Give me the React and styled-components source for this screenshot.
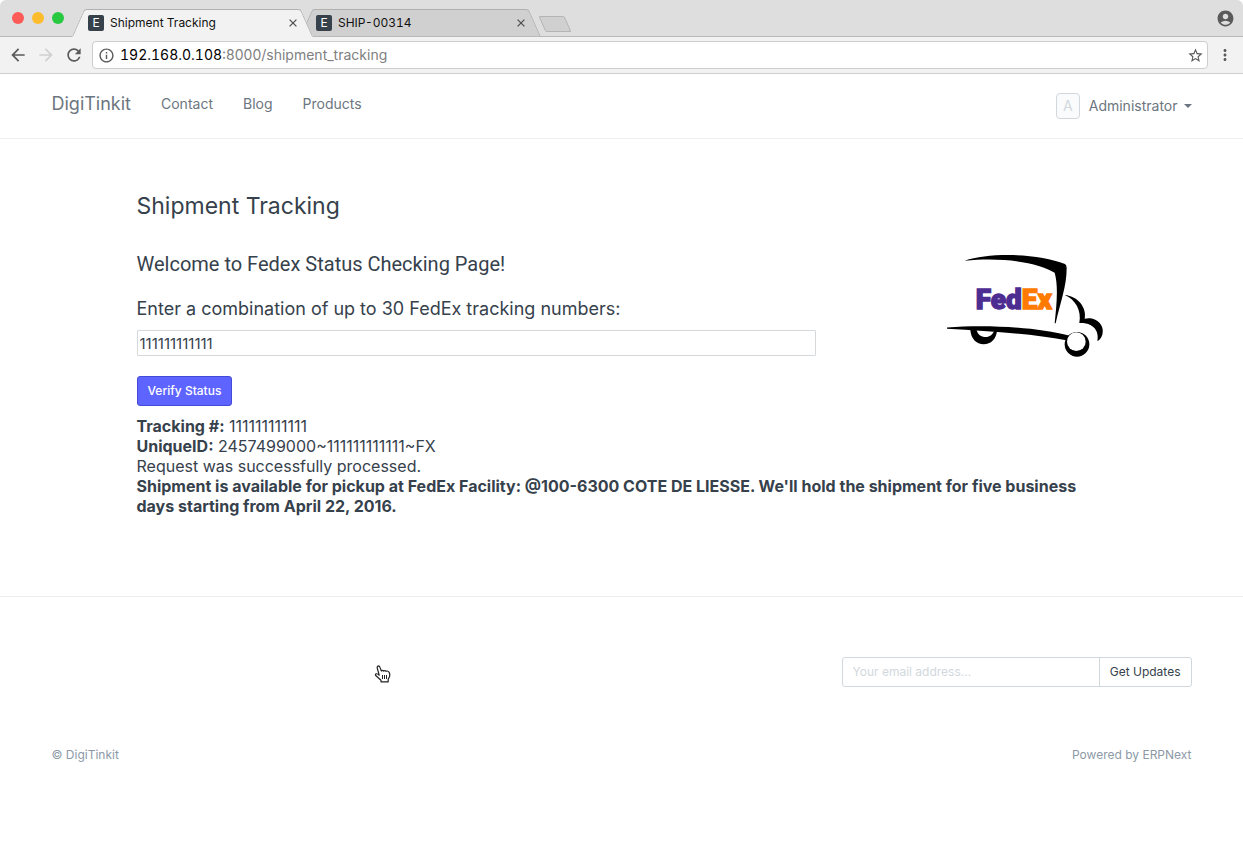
import React, { useState } from 'react';
import styled, { createGlobalStyle, css } from 'styled-components';
import {
  MdArrowBack,
  MdArrowForward,
  MdRefresh,
  MdInfoOutline,
  MdStarBorder,
  MdMoreVert,
  MdAccountCircle,
} from 'react-icons/md';

const GlobalStyle = createGlobalStyle`
  *, *::before, *::after { box-sizing: border-box; }
  body {
    margin: 0;
    background: #fff;
    color: #36414c;
    font-family: Inter, "Liberation Sans", sans-serif;
    font-size: 14px;
    line-height: 20px;
  }
  button, input { font: inherit; color: inherit; }
  h1, h2, p { margin: 0; }
  a { color: inherit; text-decoration: none; }
`;

const plainButton = css`
  display: flex;
  align-items: center;
  justify-content: center;
  padding: 0;
  border: 0;
  background: none;
`;

/* Browser window */

const TabStrip = styled.div`
  display: flex;
  align-items: flex-end;
  height: 37px;
  padding: 0 8px 0 12px;
  background: #dedede;
  border-bottom: 1px solid #b9b9b9;
  border-radius: 6px 6px 0 0;
`;

const WindowControls = styled.div`
  display: flex;
  align-self: center;
  gap: 8px;
  width: 54px;
`;

const WindowDot = styled.button`
  ${plainButton}
  width: 12px;
  height: 12px;
  border-radius: 50%;
  background: ${(p) => p.$color};
`;

const Tabs = styled.div`
  display: flex;
  align-items: flex-end;
  flex: 1;
  margin-left: 12px;
`;

const Tab = styled.div`
  position: relative;
  z-index: ${(p) => (p.$active ? 2 : 1)};
  display: flex;
  align-items: center;
  gap: 6px;
  width: 229px;
  height: 28px;
  margin: 0 -1px -1px 0;
  padding: 0 8px 0 10px;
  color: #111;
  font-size: 12px;
  font-variant-numeric: tabular-nums;

  &::before,
  &::after {
    content: '';
    position: absolute;
    z-index: -1;
    top: 0;
    bottom: 0;
    background: ${(p) => (p.$active ? '#f2f2f2' : '#d0d0d0')};
    border: 1px solid #b0b0b0;
    border-bottom-color: ${(p) => (p.$active ? '#f2f2f2' : '#b9b9b9')};
  }
  &::before {
    left: 0;
    right: 30%;
    border-right: 0;
    border-top-left-radius: 3px;
    transform: skewX(-24deg);
  }
  &::after {
    left: 30%;
    right: 0;
    border-left: 0;
    border-top-right-radius: 3px;
    transform: skewX(24deg);
  }
`;

const Favicon = styled.span`
  width: 16px;
  height: 16px;
  border-radius: 2px;
  background: #36414c;
  color: #fff;
  font-size: 12px;
  line-height: 16px;
  text-align: center;
`;

const TabTitle = styled.span`
  flex: 1;
`;

const CloseButton = styled.button`
  ${plainButton}
  width: 12px;
  height: 12px;
  color: #505050;
`;

const NewTab = styled.button`
  ${plainButton}
  width: 26px;
  height: 16px;
  margin: 0 0 4px 8px;
  border: 1px solid #b4b4b4;
  border-radius: 2px;
  background: #d0d0d0;
  transform: skewX(24deg);
`;

const ProfileButton = styled.button`
  ${plainButton}
  align-self: center;
  color: #5a5a5a;
  font-size: 19px;
`;

const Toolbar = styled.div`
  display: flex;
  align-items: center;
  gap: 8px;
  height: 37px;
  padding: 0 9px 0 8px;
  background: #f2f2f2;
  border-bottom: 1px solid #cfcfcf;
`;

const ToolButton = styled.button`
  ${plainButton}
  width: ${(p) => (p.$narrow ? 18 : 20)}px;
  height: 20px;
  color: ${(p) => (p.disabled ? '#d0d0d0' : '#5a5a5a')};
  font-size: 20px;
`;

const AddressBar = styled.div`
  display: flex;
  align-items: center;
  flex: 1;
  gap: 5px;
  height: 28px;
  padding: 0 3px 0 5px;
  border: 1px solid #cdcdcd;
  border-radius: 4px;
  background: #fff;
  color: #5a5a5a;
  font-size: 17px;
`;

const Url = styled.span`
  flex: 1;
  color: #808080;
  font-size: 14px;

  b {
    color: #000;
    font-weight: 400;
    font-variant-numeric: tabular-nums;
  }
`;

/* Web page */

const Container = styled.div`
  display: flex;
  align-items: flex-start;
  justify-content: space-between;
  max-width: 1170px;
  margin: 0 auto;
  padding: 0 15px;
`;

const SiteHeader = styled.header`
  padding: 19px 0;
  border-bottom: 1px solid #ebeff2;
  color: #6c7680;
`;

const SiteNav = styled.nav`
  display: flex;
  align-items: center;
  gap: 30px;
  height: 22px;
`;

const Brand = styled.a`
  font-size: 18px;
`;

const UserMenu = styled.button`
  ${plainButton}
  gap: 9px;
`;

const Avatar = styled.span`
  width: 24px;
  height: 26px;
  border: 1px solid #d1d8dd;
  border-radius: 4px;
  background: #fafbfc;
  color: #d1d8dd;
  line-height: 24px;
`;

const UserName = styled.span`
  display: flex;
  align-items: center;
  gap: 6px;

  &::after {
    content: '';
    border: 4px solid transparent;
    border-top-color: currentColor;
    border-bottom: 0;
  }
`;

const Main = styled.main`
  max-width: 1000px;
  margin: 0 auto;
  padding: 53px 15px 80px;
`;

const PageTitle = styled.h1`
  font-size: 23px;
  font-weight: 400;
  line-height: 28px;
`;

const Intro = styled.div`
  display: flex;
  justify-content: space-between;
  margin-top: 32px;
`;

const TrackingForm = styled.form`
  flex: 0 0 70%;
`;

const Welcome = styled.h2`
  margin-bottom: 21px;
  font-family: Roboto, Inter, sans-serif;
  font-size: 20px;
  font-weight: 400;
  line-height: 24px;
`;

const FieldLabel = styled.label`
  display: block;
  margin-bottom: 9px;
  font-size: 18px;
  line-height: 24px;
`;

const TrackingInput = styled.input`
  display: block;
  width: 100%;
  height: 26px;
  margin-bottom: 20px;
  padding: 0 2px;
  border: 1px solid #d6d9dc;
  border-radius: 1px;
  outline: 0;
  font-size: 15px;
`;

const PrimaryButton = styled.button`
  height: 30px;
  padding: 0 10px;
  border: 1px solid #444bd6;
  border-radius: 3px;
  background: #5e64ff;
  color: #fff;
  font-size: 12px;
  font-weight: 500;
`;

const Truck = styled.svg`
  flex: none;
  width: 160px;
  height: 110px;
`;

const Result = styled.div`
  margin-top: 10px;
  font-size: 16px;

  strong {
    font-weight: 700;
  }
`;

const SiteFooter = styled.footer`
  padding: 60px 0;
  border-top: 1px solid #ebeff2;
  color: #8d99a6;
  font-size: 12px;
`;

const Subscribe = styled.form`
  display: flex;
  width: 350px;
  height: 30px;
  margin: 0 0 58px auto;
  border: 1px solid #d1d8dd;
  border-radius: 3px;
  color: #36414c;
`;

const EmailInput = styled.input`
  flex: 1;
  min-width: 0;
  padding: 0 10px;
  border: 0;
  outline: 0;
  background: none;

  &::placeholder {
    color: #d1d8dd;
    opacity: 1;
  }
`;

const SubscribeButton = styled.button`
  padding: 0 10px;
  border: 0;
  border-left: 1px solid #d1d8dd;
  background: none;
`;

const Pointer = styled.svg`
  position: absolute;
  top: 665px;
  left: 374px;
  width: 17px;
  height: 18px;
  pointer-events: none;
`;

function BrowserTab({ title, active }) {
  return (
    <Tab $active={active}>
      <Favicon>E</Favicon>
      <TabTitle>{title}</TabTitle>
      <CloseButton aria-label={`Close ${title}`}>
        <svg width="8" height="8" viewBox="0 0 8 8" stroke="currentColor" strokeWidth="1.3">
          <path d="M.6.6l6.8 6.8M7.4.6L.6 7.4" />
        </svg>
      </CloseButton>
    </Tab>
  );
}

function FedexTruck() {
  return (
    <Truck viewBox="52 36 480 330" role="img" aria-label="FedEx truck">
      <path d="M105 62C180 36 330 40 406 72Q411 75 411 84C411 140 392 185 378 250L375 250C380 200 387 140 375 98C330 70 230 50 105 62Z" />
      <path d="M405 165C446 168 472 205 465 236C495 228 527 252 518 284Q513 299 503 303C510 272 489 246 449 249C456 212 438 179 405 165Z" />
      <path d="M122 270H202C201 297 183 313 162 313C140 313 124 296 122 270Z" />
      <path d="M141 270H194C190 284 180 291 168 291C154 291 144 284 141 270Z" fill="#fff" />
      <path d="M48 263C170 252 320 262 420 287L410 301C310 281 180 274 48 266Z" />
      <circle cx="442" cy="313" r="37" />
      <circle cx="440" cy="305" r="28" fill="#fff" />
      <g fontFamily="Roboto, sans-serif" fontWeight="900" fontSize="84" strokeWidth="4">
        <text x="138" y="208" fill="#4d2d91" stroke="#4d2d91">
          Fed<tspan fill="#ff7a00" stroke="#ff7a00">Ex</tspan>
        </text>
      </g>
    </Truck>
  );
}

function HandPointer() {
  return (
    <Pointer viewBox="0 0 17 18" aria-hidden="true">
      <path
        d="M5.2 10.2L3.2 3Q2.900 1.200 4.200 .9Q5.500 .8 6 2.400L7.400 6Q8.600 4.900 9.700 6Q11.100 4.900 12.200 6.300Q14 5.400 15 7.200Q16.200 8.800 15.600 11.500L14.200 14.200V16.800H7V15.200L2 10.800Q.9 9.600 1.900 8.900Q3.200 8.300 5.200 10.200Z"
        fill="#fff"
        stroke="#222"
        strokeWidth="1.2"
        strokeLinejoin="round"
      />
      <path d="M8.500 10v4M10.500 10v4M12.500 10v4" stroke="#222" />
    </Pointer>
  );
}

export default function App() {
  const [numbers, setNumbers] = useState('111111111111');

  return (
    <>
      <GlobalStyle />
      <TabStrip>
        <WindowControls>
          <WindowDot aria-label="Close window" $color="#fc5b57" />
          <WindowDot aria-label="Minimize window" $color="#fdbc2e" />
          <WindowDot aria-label="Zoom window" $color="#28c840" />
        </WindowControls>
        <Tabs>
          <BrowserTab title="Shipment Tracking" active />
          <BrowserTab title="SHIP-00314" />
          <NewTab aria-label="New tab" />
        </Tabs>
        <ProfileButton aria-label="Profile"><MdAccountCircle /></ProfileButton>
      </TabStrip>
      <Toolbar>
        <ToolButton aria-label="Back"><MdArrowBack /></ToolButton>
        <ToolButton aria-label="Forward" disabled><MdArrowForward /></ToolButton>
        <ToolButton aria-label="Reload"><MdRefresh /></ToolButton>
        <AddressBar>
          <MdInfoOutline />
          <Url><b>192.168.0.108</b>:8000/shipment_tracking</Url>
          <MdStarBorder />
        </AddressBar>
        <ToolButton aria-label="Menu" $narrow><MdMoreVert /></ToolButton>
      </Toolbar>

      <SiteHeader>
        <Container>
          <SiteNav>
            <Brand href="#">DigiTinkit</Brand>
            <a href="#contact">Contact</a>
            <a href="#blog">Blog</a>
            <a href="#products">Products</a>
          </SiteNav>
          <UserMenu>
            <Avatar>A</Avatar>
            <UserName>Administrator</UserName>
          </UserMenu>
        </Container>
      </SiteHeader>

      <Main>
        <PageTitle>Shipment Tracking</PageTitle>
        <Intro>
          <TrackingForm onSubmit={(e) => e.preventDefault()}>
            <Welcome>Welcome to Fedex Status Checking Page!</Welcome>
            <FieldLabel htmlFor="numbers">
              Enter a combination of up to 30 FedEx tracking numbers:
            </FieldLabel>
            <TrackingInput id="numbers" value={numbers} onChange={(e) => setNumbers(e.target.value)} />
            <PrimaryButton type="submit">Verify Status</PrimaryButton>
          </TrackingForm>
          <FedexTruck />
        </Intro>
        <Result>
          <p><strong>Tracking #:</strong> 111111111111</p>
          <p><strong>UniqueID:</strong> 2457499000~111111111111~FX</p>
          <p>Request was successfully processed.</p>
          <p>
            <strong>
              Shipment is available for pickup at FedEx Facility: @100-6300 COTE DE LIESSE. We'll
              hold the shipment for five business days starting from April 22, 2016.
            </strong>
          </p>
        </Result>
      </Main>

      <SiteFooter>
        <Container>
          <Subscribe onSubmit={(e) => e.preventDefault()}>
            <EmailInput type="email" aria-label="Email address" placeholder="Your email address..." />
            <SubscribeButton type="submit">Get Updates</SubscribeButton>
          </Subscribe>
        </Container>
        <Container>
          <span>© DigiTinkit</span>
          <a href="#erpnext">Powered by ERPNext</a>
        </Container>
      </SiteFooter>
      <HandPointer />
    </>
  );
}
